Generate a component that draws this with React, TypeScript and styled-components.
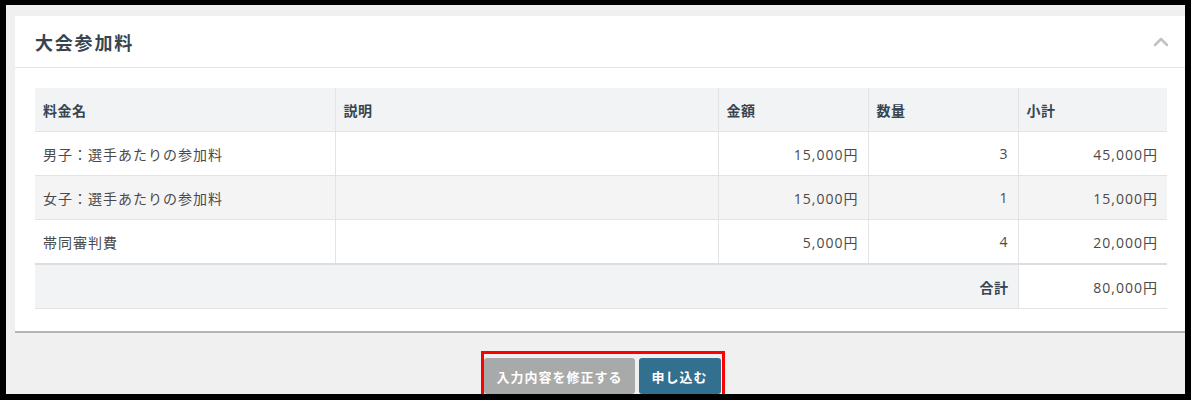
import styled, { createGlobalStyle } from 'styled-components';
import { ChevronUp } from 'lucide-react';

interface FeeRow {
  name: string;
  note: string;
  price: string;
  qty: number;
  subtotal: string;
}

const rows: FeeRow[] = [
  { name: '男子：選手あたりの参加料', note: '', price: '15,000円', qty: 3, subtotal: '45,000円' },
  { name: '女子：選手あたりの参加料', note: '', price: '15,000円', qty: 1, subtotal: '15,000円' },
  { name: '帯同審判費', note: '', price: '5,000円', qty: 4, subtotal: '20,000円' },
];

function App() {
  return (
    <>
      <GlobalStyle />
      <Page>
        <Card>
          <CardHeader>
            <Title>大会参加料</Title>
            <CollapseIcon size={24} strokeWidth={2.5} />
          </CardHeader>
          <CardBody>
            <FeeTable>
              <colgroup>
                <col style={{ width: 300 }} />
                <col style={{ width: 383 }} />
                <col style={{ width: 150 }} />
                <col style={{ width: 150 }} />
                <col />
              </colgroup>
              <thead>
                <tr>
                  <Th>料金名</Th>
                  <Th>説明</Th>
                  <Th>金額</Th>
                  <Th>数量</Th>
                  <Th>小計</Th>
                </tr>
              </thead>
              <tbody>
                {rows.map((row, i) => (
                  <Tr key={row.name} $striped={i % 2 === 1}>
                    <Td>{row.name}</Td>
                    <Td>{row.note}</Td>
                    <Td $right>{row.price}</Td>
                    <Td $right>{row.qty}</Td>
                    <Td $right>{row.subtotal}</Td>
                  </Tr>
                ))}
                <TotalRow>
                  <TotalLabel colSpan={4}>合計</TotalLabel>
                  <Td $right>80,000円</Td>
                </TotalRow>
              </tbody>
            </FeeTable>
          </CardBody>
        </Card>
        <Footer>
          <ButtonGroup>
            <Button $variant="secondary">入力内容を修正する</Button>
            <Button $variant="primary">申し込む</Button>
          </ButtonGroup>
        </Footer>
      </Page>
      <Frame />
    </>
  );
}

const GlobalStyle = createGlobalStyle`
  html, body {
    margin: 0;
    padding: 0;
    background: #f0f0f0;
    overflow: hidden;
  }
  body {
    font-family: "Open Sans", "Noto Sans CJK JP", sans-serif;
    color: #4a4a4a;
  }
`;

const Frame = styled.div`
  position: fixed;
  inset: 0;
  border-style: solid;
  border-color: #000;
  border-width: 5px 6px 6px 6px;
  pointer-events: none;
`;

const Page = styled.div`
  width: 1191px;
  height: 400px;
  box-sizing: border-box;
  padding: 16px 0 0 15px;
`;

const Card = styled.section`
  background: #fff;
  border-bottom: 2px solid #b5b5b5;
`;

const CardHeader = styled.div`
  height: 52px;
  box-sizing: border-box;
  display: flex;
  align-items: center;
  justify-content: space-between;
  padding: 0 18px 0 20px;
  border-bottom: 1px solid #e3e3e3;
`;

const Title = styled.h2`
  margin: 0;
  font-size: 18px;
  font-weight: 700;
  letter-spacing: 1.8px;
  color: #36454f;
`;

const CollapseIcon = styled(ChevronUp)`
  color: #c2c2c2;
`;

const CardBody = styled.div`
  padding: 20px 24px 22px 20px;
`;

const FeeTable = styled.table`
  width: 100%;
  border-collapse: collapse;
  table-layout: fixed;
  font-size: 14px;
  letter-spacing: 1px;
`;

const Th = styled.th`
  height: 43px;
  padding: 0 8px;
  text-align: left;
  font-weight: 700;
  letter-spacing: 0.5px;
  color: #36454f;
  background: #f2f3f5;
  border-bottom: 1px solid #e2e3e5;
  border-left: 1px solid #e2e3e5;
  &:first-child {
    border-left: none;
  }
`;

const Tr = styled.tr<{ $striped: boolean }>`
  background: ${(p) => (p.$striped ? '#f4f4f5' : '#fff')};
`;

const Td = styled.td<{ $right?: boolean }>`
  height: 43px;
  padding: 0 8px 0 8px;
  padding-right: ${(p) => (p.$right ? '9px' : '8px')};
  text-align: ${(p) => (p.$right ? 'right' : 'left')};
  border-bottom: 1px solid #e2e3e5;
  border-left: 1px solid #e2e3e5;
  white-space: nowrap;
  &:first-child {
    border-left: none;
  }
`;

const TotalRow = styled.tr`
  border-top: 2px solid #dcdde0;
`;

const TotalLabel = styled.td`
  height: 43px;
  background: #f2f3f5;
  text-align: right;
  padding: 0 9px 0 8px;
  font-weight: 700;
  letter-spacing: 0.5px;
  color: #36454f;
  border-bottom: 1px solid #e2e3e5;
`;

const Footer = styled.div`
  display: flex;
  justify-content: center;
  margin-top: 18px;
`;

const ButtonGroup = styled.div`
  display: flex;
  gap: 4px;
  padding: 4px 1px 4px 0;
  border: 3px solid #ff0000;
`;

const Button = styled.button<{ $variant: 'primary' | 'secondary' }>`
  height: 36px;
  padding: 0 ${(p) => (p.$variant === 'primary' ? '13px' : '12px')};
  border: none;
  border-radius: 3px;
  font-family: "Open Sans", "Noto Sans CJK JP", sans-serif;
  font-size: 13px;
  font-weight: 700;
  letter-spacing: 1px;
  color: #fff;
  background: ${(p) => (p.$variant === 'primary' ? '#336f8e' : '#a8aaa9')};
  cursor: pointer;
`;

export default App;
